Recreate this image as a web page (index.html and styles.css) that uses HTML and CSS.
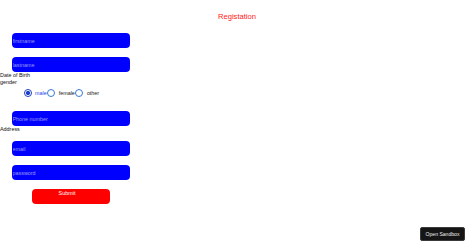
FILE: index.html
```html
<!DOCTYPE html>
<html lang="en">
<head>
<meta charset="utf-8">
<title>Registation</title>
<link rel="stylesheet" href="styles.css">
</head>
<body>
<form class="form">
  <h3 class="title">Registation</h3>
  <input class="field first" type="text" placeholder="firstname">
  <input class="field gap" type="text" placeholder="lastname">
  <div class="label">Date of Birth</div>
  <div class="label">gender</div>
  <div class="radios">
    <span class="radio checked"></span><span class="opt sel">male</span><span class="radio"></span><span class="opt">female</span><span class="radio"></span><span class="opt">other</span>
  </div>
  <input class="field phone" type="text" placeholder="Phone number">
  <div class="label">Address</div>
  <input class="field email" type="text" placeholder="email">
  <input class="field gap" type="password" placeholder="password">
  <button class="submit" type="button">Submit</button>
</form>
<button class="sandbox" type="button">Open Sandbox</button>
</body>
</html>
```
FILE: styles.css
```css
html, body {
  margin: 0;
  padding: 0;
  background: #ffffff;
}
body {
  font-family: "Liberation Sans", Arial, sans-serif;
  font-size: 5.4px;
  color: #111111;
}
.form {
  display: flex;
  flex-direction: column;
  align-items: flex-start;
}
.title {
  align-self: stretch;
  margin: 0;
  padding-top: 12px;
  font-size: 7.6px;
  line-height: 10px;
  font-weight: normal;
  text-align: center;
  color: #ff1a1a;
}
.field {
  display: block;
  box-sizing: border-box;
  width: 118px;
  height: 15px;
  margin: 0 0 0 12px;
  padding: 0 0 0 0.5px;
  border: none;
  border-radius: 4px;
  background: #0000ff;
  color: #ffffff;
  font-family: "Liberation Sans", Arial, sans-serif;
  font-size: 5.4px;
  outline: none;
}
.field::placeholder {
  color: #9c9cf4;
}
.first { margin-top: 11px; }
.gap { margin-top: 9px; }
.phone { margin-top: 11px; }
.email { margin-top: 8px; }
.label {
  line-height: 7px;
  height: 7px;
  color: #111111;
}
.radios {
  display: flex;
  align-items: center;
  height: 14px;
  padding-left: 24px;
}
.radio {
  box-sizing: border-box;
  width: 8px;
  height: 8px;
  border-radius: 50%;
  border: 1px solid #3a7bd5;
  background: #ffffff;
}
.radio.checked {
  border: 1.2px solid #1a3fc4;
  background: radial-gradient(circle, #1a3fc4 0 2px, #ffffff 2.2px);
}
.opt {
  margin-left: 4px;
  color: #222222;
}
.opt.sel {
  margin-left: 3px;
  color: #2a3ee8;
}
.submit {
  box-sizing: border-box;
  width: 78px;
  height: 15px;
  margin: 9px 0 0 32px;
  padding: 1px 8px 0 0;
  border: none;
  border-radius: 4px;
  background: #ff0000;
  color: #ffffff;
  font-family: "Liberation Sans", Arial, sans-serif;
  font-size: 5.4px;
  font-weight: normal;
  line-height: 6px;
  display: flex;
  justify-content: center;
  align-items: flex-start;
}
.sandbox {
  position: fixed;
  right: 9px;
  bottom: 7px;
  box-sizing: border-box;
  width: 45px;
  height: 14px;
  padding: 0;
  border: 1px solid #3a3a3a;
  border-radius: 2px;
  background: #151515;
  color: #f0f0f0;
  font-family: "Liberation Sans", Arial, sans-serif;
  font-size: 5.1px;
  line-height: 12px;
  text-align: center;
}
```
